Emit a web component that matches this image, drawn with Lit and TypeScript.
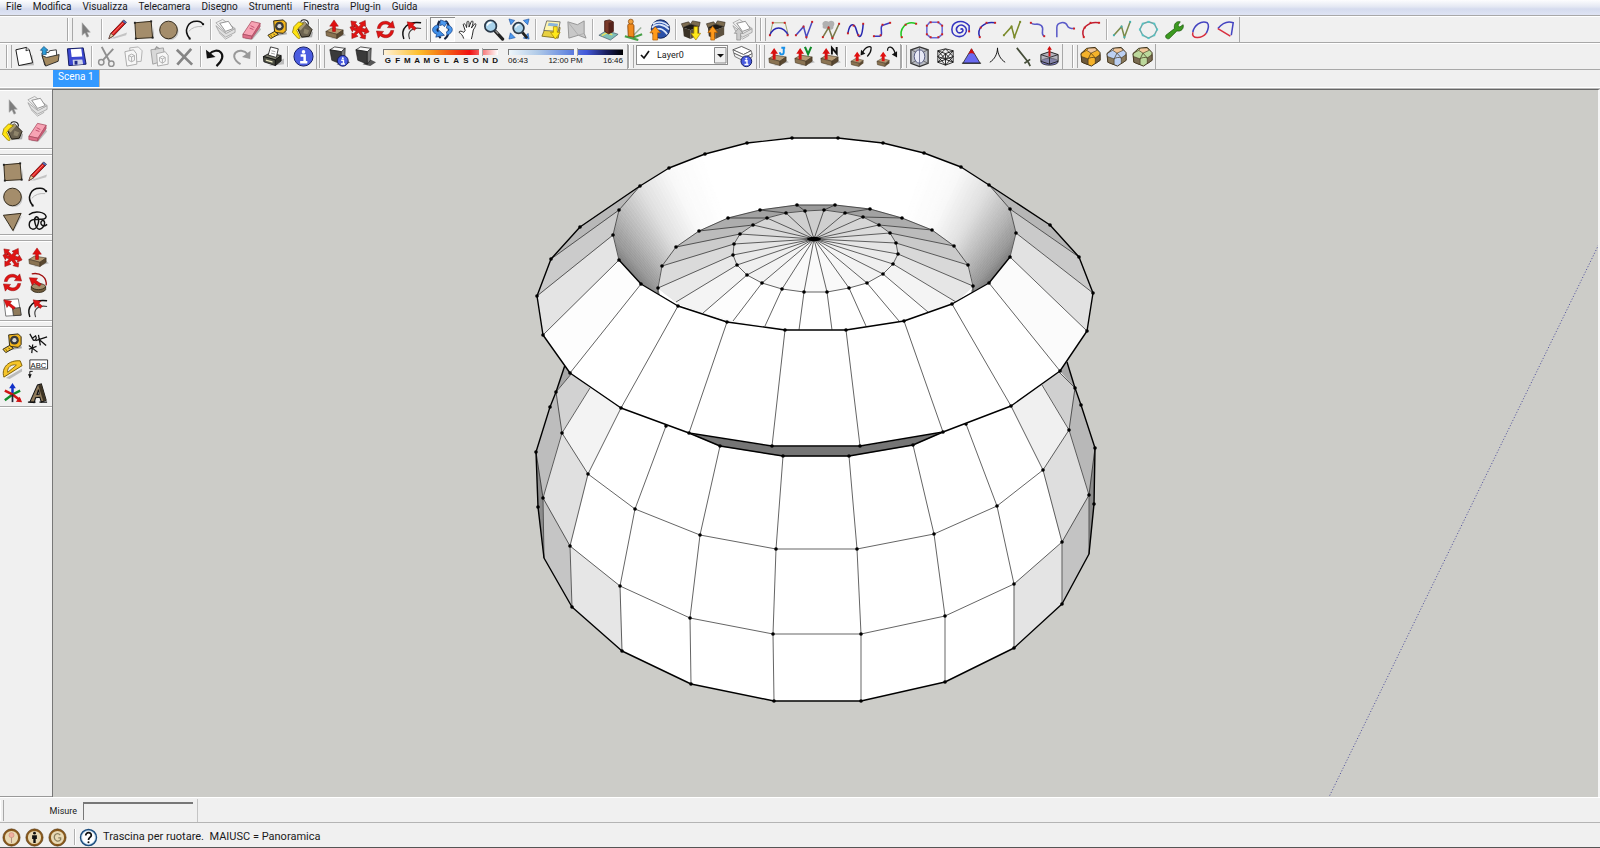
import { LitElement, html, svg, css, nothing } from "lit";
import { customElement, property, state } from "lit/decorators.js";

/* ---------- icon artwork, drawn on a 24 x 24 grid ---------- */

const slab = svg`
  <path d="M8 22 L16 20 L24 18 L20 15Z" fill="#bbb"/>
  <path d="M3 14 L9 10.500 L21 12.500 L14.500 17Z" fill="#b59b75" stroke="#40321f" stroke-width=".6"/>
  <path d="M3 14 L14.500 17 V21.500 L3.500 18.500Z" fill="#8a7352" stroke="#40321f" stroke-width=".6"/>
  <path d="M14.500 17 L21 12.500 V17 L14.500 21.500Z" fill="#5a4830" stroke="#40321f" stroke-width=".6"/>`;
const upArrow = svg`<path d="M11.500 2 L16 8.500 H13 V14 H10 V8.500 H7Z" fill="#e01010" stroke="#900" stroke-width=".5"/>`;
const smallPush = svg`
  <path d="M1 17 L6 14 L14 16 L9.500 19Z" fill="#b59b75" stroke="#40321f" stroke-width=".5"/>
  <path d="M1 17 L9.500 19 V22.500 L1.500 20.500Z" fill="#8a7352" stroke="#40321f" stroke-width=".5"/>
  <path d="M9.500 19 L14 16 V19 L9.500 22.500Z" fill="#5a4830"/>
  <path d="M7.500 7 L11 12 H9 V17 H6 V12 H4Z" fill="#e01010"/>`;
const glass = svg`
  <path d="M14 14 L21.500 22" stroke="#222" stroke-width="3.400" stroke-linecap="round"/>
  <path d="M14 13 L17 16.500" stroke="#888" stroke-width="1.500"/>
  <circle cx="9" cy="8.500" r="6" fill="#a9d3ec" stroke="#2b3a4a" stroke-width="1.800"/>
  <path d="M5.500 8 A4 4 0 0 1 10 4.800" stroke="#fff" stroke-width="1.400" fill="none"/>`;
const info = (x: number, y: number, r: number) => svg`
  <circle cx=${x} cy=${y} r=${r} fill="#4a5ce0" stroke="#101860" stroke-width="1"/>
  <circle cx=${x} cy=${y - r * 0.48} r=${r * 0.19} fill="#fff"/>
  <path d="M${x - r * 0.3} ${y - r * 0.1} H${x + r * 0.12} V${y + r * 0.6} M${x - r * 0.35} ${y + r * 0.6} H${x + r * 0.4}"
    fill="none" stroke="#fff" stroke-width=${r * 0.26}/>`;
const darkCube = svg`
  <path d="M10 20 L18 22 L24 18 L18 15Z" fill="#555"/>
  <path d="M3 5 L8 2 L19 3.500 L15 7Z" fill="#fafafa" stroke="#222" stroke-width=".8"/>
  <path d="M3 5 L15 7 V20 L5 16Z" fill="#3a3a3a" stroke="#111" stroke-width=".6"/>
  <path d="M15 7 L19 3.500 L18.500 15.500 L15 20Z" fill="#777" stroke="#111" stroke-width=".6"/>`;
const crate = (c: string) => svg`
  <path d="M3 10 L11 12.500 V22 L4 19Z" fill="#3a3226"/>
  <path d="M11 12.500 L20 9 V17.500 L11 22Z" fill="#5e5240"/>
  <path d="M3 10 L1.500 6 L9 4 L11 6.500Z M11 6.500 L13 3 L21 4.500 L20 9Z" fill="#7c6c50" stroke="#2a2218" stroke-width=".6"/>
  <path d="M3 10 L11 6.500 L20 9 L11 12.500Z" fill="#1e1a14"/>
  ${c === "down"
    ? svg`<path d="M14.500 9 H18.500 V16 H21.500 L16.500 23 L11.500 16 H14.500Z" fill="#ffe818" stroke="#a08000" stroke-width=".7"/>`
    : svg`<path d="M6 23 V15 H3 L8 8.500 L13 15 H10 V23Z" fill="#ff9a1a" stroke="#a85800" stroke-width=".7"/>`}`;
const roundedBox = (c: string, dark: string) => svg`
  <path d="M2 9 L8 3.500 L17 2.500 L22 8 V16 L13 22 L3 18Z" fill=${c} stroke="#3a2c14" stroke-width="1"/>
  <path d="M8 5.500 L10 3.300 L16.500 3 L19 5.500 L12.500 8.500Z" fill="#f2c79a" stroke="#3a2c14" stroke-width=".6"/>
  <path d="M2.500 12 L9.500 14.500 V20.500 L3 18Z" fill=${dark} stroke="#3a2c14" stroke-width=".6"/>
  <path d="M17 13.500 L22 10 V16 L17 19.500Z" fill=${dark} stroke="#3a2c14" stroke-width=".6"/>
  <path d="M9.500 14.500 L12.500 8.500 L17 13.500 M9.500 14.500 C11 13 15 12.500 17 13.500 M2 9 L8 5.500" fill="none" stroke="#3a2c14" stroke-width=".7"/>`;
const dots = (pts: number[][], c = "#d02020") => pts.map(([x, y]) => svg`<rect x=${x - 1} y=${y - 1} width="2" height="2" fill=${c}/>`);
const curve = (d: string, c: string, pts: number[][] = [], dc?: string) => svg`
  <path d=${d} fill="none" stroke=${c} stroke-width="1.600"/>${dots(pts, dc)}`;
const sheets = svg`
  <path d="M2 8 L5 14 L12 20 L22 15 V11 L12 16Z" fill="#e0e0e0" stroke="#9a9a9a" stroke-width=".8"/>
  <path d="M2 5 L9 1.500 L22 11 L13 16Z" fill="#ededed" stroke="#a0a0a0" stroke-width=".8"/>
  <path d="M6 5.500 L15 3.500 L20 11 L12 14Z" fill="#fff" stroke="#858585" stroke-width=".9"/>
  <path d="M5 15 L12 22 L19 18" fill="none" stroke="#aaa" stroke-width="1"/>`;
const coin = (inner: unknown) => svg`
  <circle cx="12" cy="12" r="9.600" fill="#e9d9b4" stroke="#8a5a1c" stroke-width="2.600"/>
  <circle cx="12" cy="12" r="10.900" fill="none" stroke="#4a2c08" stroke-width=".7"/>${inner}`;

const ART: Record<string, unknown> = {
  arrow: svg`<path d="M8.500 5 V18 L11.500 15.500 L13.500 20 L15.500 19 L13.500 14.800 H17Z" fill="#7d7d7d" stroke="#a5a5a5" stroke-width=".6"/>`,
  pencil: svg`<path d="M4 21.500 L22 15 L21 18 L9 21.500Z" fill="#c4c4c4"/>
    <path d="M3 21.500 L5 16 L17.500 3 L20.500 5.500 L8 18.500Z" fill="#d81818" stroke="#5a0808" stroke-width=".8"/>
    <path d="M6.500 17 L19 4" stroke="#ff8a80" stroke-width="1"/>
    <path d="M3 21.500 L5 16 L8 18.500Z" fill="#f0d2a0" stroke="#333" stroke-width=".6"/>
    <path d="M17 3.500 L18.500 2 L21.500 4.500 L20 6Z" fill="#5b6fc0" stroke="#223" stroke-width=".6"/>`,
  rect: svg`<path d="M5 22.500 L23 21 V9 L21 21Z" fill="#c0c0c0"/><path d="M3 5 L20 3.500 L21.500 20.500 L4 21.500Z" fill="#a48d6b" stroke="#2f2718" stroke-width="1"/>
    ${dots([[3, 5], [20, 3.5], [21.5, 20.5], [4, 21.5]], "#222")}`,
  circle: svg`<circle cx="13.500" cy="14" r="9" fill="#c6c6c6"/><circle cx="12" cy="12.500" r="9.200" fill="#a48d6b" stroke="#2f2718" stroke-width="1"/>`,
  arc: svg`<path d="M6 14 Q11 8 20 9" stroke="#b5b5b5" stroke-width="1" fill="none"/>
    <path d="M7 21.500 C0 13 5 3 15 3.500 C18 3.600 20 5 21 7" fill="none" stroke="#111" stroke-width="1.600"/>${dots([[7, 21.5], [21, 6.5]], "#111")}`,
  component: sheets,
  eraser: svg`<path d="M5 22 L13 22.500 L22 12 L20 9Z" fill="#bbb"/><path d="M3 17 L12 3.500 L21 5.500 L12.500 19Z" fill="#f7a3b4" stroke="#a84c60" stroke-width=".8"/>
    <path d="M3 17 L12.500 19 L12 22 L3 20.500Z" fill="#e0708a" stroke="#a84c60" stroke-width=".8"/>
    <path d="M12.500 19 L21 5.500 V9 L12 22Z" fill="#d05c78" stroke="#a84c60" stroke-width=".6"/><path d="M11 8 L15 10 M10 10.500 L14 12" stroke="#c05070" stroke-width="1"/>`,
  tape: svg`<path d="M9 19 L22 17 L20 12Z" fill="#aaa"/><path d="M8 3 L18 2 L21 5 V13 L18 16 L9 15Z" fill="#f2b51c" stroke="#2b2410" stroke-width="1"/>
    <circle cx="14" cy="8.500" r="4.600" fill="#3a3a3a"/><circle cx="14" cy="8.500" r="2.200" fill="#d8d8d8"/>
    <path d="M9 14 L13 17 L5 21.500 L2 18Z" fill="#f6c52a" stroke="#2b2410" stroke-width="1"/><path d="M5 18 L6 19.500 M8 16.500 L9 18" stroke="#222" stroke-width=".8"/>`,
  paint: svg`<path d="M10 21 L22 20 L23 14Z" fill="#aaa"/><path d="M6 9 L14 4 L22 12 L19 19 L11 20Z" fill="#6b6250" stroke="#1e1a10" stroke-width="1"/>
    <path d="M6 9 L14 4 L16 6 L10 13Z" fill="#a79a78"/><path d="M10 4 C12 0 19 2 18 7" fill="none" stroke="#222" stroke-width="1.200"/>
    <path d="M13 6 L8 4 L3 9 L1.500 15 L7 21 C10 22 10 21 8.500 18 L6 13 L9 9Z" fill="#ffe312" stroke="#8a7600" stroke-width=".8"/><path d="M14 11 L19 13 L17 17 L13 16Z" fill="#8f856b"/>`,
  pushpull: svg`${slab}${upArrow}`,
  move: svg`<path d="M3 3 L9 4 L7.800 5.800 L11 9 L13.500 7 L11.500 5.500 L18 2.500 L18.500 9 L16.500 8 L14.500 10.500 L18 11.500 L19 9.500 L22 14.500 L17 17 L17.500 14.800 L14 14 L16.500 18 L18.500 17.500 L18 22 L12.500 20.500 L14 19 L11 15 L8.500 17.500 L10.500 19 L4 21.500 L4 15.500 L6 16.500 L8.500 13.500 L5.500 12.500 L4.500 14.500 L2 9.500 L7 8 L6.500 10 L9 11 L5.500 7.500 L4 9Z" fill="#e01414" stroke="#8c0808" stroke-width=".5"/>`,
  rotate: svg`<path d="M3.500 11 C4 4 12 1 17.500 5.500 L19.500 3 L21.500 10.500 L14 10 L15.800 7.800 C12 5 7.500 6.500 6.500 11Z" fill="#e01414" stroke="#8c0808" stroke-width=".5"/>
    <path d="M20.500 13 C20 20 12 23 6.500 18.500 L4.500 21 L2.500 13.500 L10 14 L8.200 16.200 C12 19 16.500 17.500 17.500 13Z" fill="#e01414" stroke="#8c0808" stroke-width=".5"/>`,
  offset: svg`<path d="M4 22 C0 11 8 3 22 5" fill="none" stroke="#111" stroke-width="1.500"/><path d="M10 22 C7 14 13 9 22 11" fill="none" stroke="#444" stroke-width="1.200"/>
    <path d="M15 13 L11.500 9.800 L9.500 12 L7.500 4 L15.500 5.500 L13.500 7.500 L17 10.500Z" fill="#e01414" stroke="#8c0808" stroke-width=".5"/>`,
  orbit: svg`<path d="M15 3 C20 6 20 18 14 22 M9 3 C6 7 6 17 10 21" fill="none" stroke="#16233f" stroke-width="2.200"/>
    <path d="M7 7 C0 9 0 15 6 17 L5 20 L14 18 L8 12.500 L7.500 14.500 C4.500 13 5 11 8.500 10Z" fill="#3f8fe8" stroke="#12397c" stroke-width=".7"/>
    <path d="M10 2 L17 4.500 L14 9 L12 7 L9 8Z M17 7 C24 9 24 15 17 18 L16 14.500 C20 13 19 11 16 10.500Z" fill="#4a98ee" stroke="#12397c" stroke-width=".7"/>`,
  hand: svg`<path d="M7 21.500 C6 18 4 16 2.500 15.500 C1.500 13.500 4 13 7 15 L8.500 13 L6.500 7 C7 5 9 6 10 10 L10.500 4 C12 2 13 4 12.500 9.500 L15 3.500 C17 2 17.500 5 15 10.500 L18.500 6 C20.500 5.500 20 8 17 12.500 L16 18 L15 22" fill="#fff" stroke="#222" stroke-width="1"/>`,
  zoom: glass,
  zoomAll: svg`<path d="M1 1 L7 2.500 L3 7Z M22 1 L16 2.500 L20.500 7Z M1 22 L2.500 15.500 L7.500 20.500Z M22 22 L21 16 L16 21Z" fill="#4a98ee" stroke="#174a9c" stroke-width=".6"/>
    <path d="M15 15 L20 21" stroke="#222" stroke-width="3"/><circle cx="11" cy="10.500" r="5.600" fill="#a9d3ec" stroke="#2b3a4a" stroke-width="1.800"/><path d="M8 10 A3.500 3.500 0 0 1 12 7" stroke="#fff" stroke-width="1.300" fill="none"/>`,
  map: svg`<path d="M2 19 L6 9 L21 10 L19 21Z" fill="#e8d040" stroke="#706010" stroke-width=".8"/><path d="M7 3 L21 4 L19 14 L4 13Z" fill="#fff6b0" stroke="#555" stroke-width=".8"/>
    <path d="M9 5 L19 6 L18 9 L8 8Z" fill="#8ab4dc"/><path d="M14 9 H18 V15 H21 L16 22 L11 15 H14Z" fill="#ffe818" stroke="#a08000" stroke-width=".7"/>`,
  terrain: svg`<path d="M3 4 L13 7 L20 3 V16 L22 21 L14 18 L4 21Z" fill="#c8c8c8" stroke="#8d8d8d" stroke-width=".9"/><path d="M3 4 L14 18 L20 16" fill="none" stroke="#a6a6a6" stroke-width=".8"/>`,
  photo: svg`<path d="M2 18 L10 13 L22 17 L14 23Z" fill="#7fc0b8" stroke="#456" stroke-width=".7"/><path d="M5 18.500 L10 15.500 L16 17.500" fill="none" stroke="#e8e060" stroke-width="1.500"/>
    <path d="M8 3 L13 2 L17 4 V14 L12 16.500 L8 14Z" fill="#7a3a2a" stroke="#3a140c" stroke-width=".8"/><path d="M12 5 L17 4 V14 L12 16.500Z" fill="#54221a"/>`,
  figure: svg`<path d="M3 19 L10 21 L21 17 M10 21 L17 23" stroke="#46a046" stroke-width="2.200" fill="none"/><path d="M10 20 L20 10" stroke="#9ab09a" stroke-width="1.500"/>
    <path d="M6 8 C6 5 12 5 12.500 8 V20 L6.500 19Z" fill="#f08a1c" stroke="#7a3c04" stroke-width=".8"/><circle cx="9.200" cy="3.800" r="2.600" fill="#f0a03c" stroke="#7a3c04" stroke-width=".7"/>`,
  earth: svg`<circle cx="13" cy="11.500" r="9.600" fill="#2a50a8" stroke="#122458" stroke-width="1"/>
    <path d="M4 10 C9 5 16 6 22 12 M5 6.500 C11 2 18 5 21.500 8.500 M4 14 C10 9 16 11 20 17" stroke="#dce8fa" stroke-width="1.700" fill="none"/>
    <path d="M5 23 V15.500 H2 L7.500 9 L13 15.500 H10 V23Z" fill="#ff9a1a" stroke="#a85800" stroke-width=".7"/>`,
  getModels: crate("down"),
  shareModel: crate("up"),
  shareComponent: svg`${sheets}<path d="M6 23 V16 H3.500 L8 10.500 L12.500 16 H10 V23Z" fill="#ccc" stroke="#888" stroke-width=".7"/>`,
  bezier: svg`<path d="M6 5 H19 L22 17 M6 5 L3 18" fill="none" stroke="#9aa06a" stroke-width="1"/>${curve("M3 18 C7 8 17 8 22 18", "#2828b0", [[3, 18], [6, 5], [18.5, 5], [21.5, 18]])}`,
  poly: curve("M3 18 L11 9 L14 20 L20 4", "#4a4ac0", [[3, 18], [11, 9], [14, 20], [20, 4]]),
  polySplit: svg`<path d="M4 8 C2 3 8 2 10 4 C14 1 18 5 15 9 C16 13 8 13 8 11 C5 12 3 10 4 8Z" fill="#b0b0b0"/>${curve("M4 20 L10 10 L14 21 L21 6", "#7a7a4a", [[4, 20], [10, 10], [14, 21], [21, 6]])}`,
  spline: curve("M3 16 C5 4 10 5 12 13 C15 24 18 20 19 6", "#2828b0", [[3, 16], [9, 8], [14, 18], [19, 6]]),
  catmull: curve("M3 19 H9 C14 19 7 7 14 7 L20 5", "#3a3ac0", [[3, 19], [10, 18], [12, 7], [20, 5]]),
  greenArc: curve("M5 21 C2 12 9 2 20 6", "#20c820", [[5, 20], [9, 7], [20, 6]]),
  roundRect: curve("M7 4.500 H16 L20 8 V17 L16 20.500 H8 L4 17 V8Z", "#6a6ad8", [[8, 4.5], [16, 4.5], [20, 8], [20, 17], [16, 20], [8, 20], [4, 17], [4, 8]]),
  spiral: curve("M12 12 C14 10 16 13 13 15 C9 17 6 12 9 9 C13 5 19 9 18 14 C16 22 3 21 3 12 C3 4 14 0 21 8 V14", "#3434c0", [[21, 14]]),
  blueArc: curve("M5 20 C1 11 10 3 21 5", "#2828b0", [[5, 20], [6, 10], [12, 5], [21, 5]]),
  olive: curve("M3 18 L11 9 L14 20 L20 4", "#7a8a2a", [[3, 18], [11, 9], [14, 20], [20, 4]], "#7a8a2a"),
  hook: curve("M4 5 C8 9 10 4 15 8 C19 12 13 16 18 19", "#5a5ac8", [[4, 5], [18, 19]]),
  hook2: curve("M4 20 V10 C4 4 13 3 15 8 C16 11 19 11 22 11", "#5a5ac8", [[22, 11]]),
  redArc: curve("M5 20 C1 11 10 3 21 5", "#c01c30", [[5, 20], [6, 10], [12, 5], [21, 5]]),
  tealPoly: curve("M3 18 L11 9 L14 20 L20 4", "#7a8a4a", [[3, 18], [11, 9], [14, 20], [20, 4]], "#40b0b0"),
  tealRing: curve("M12 4 L18 6 L21 12 L18 18 L12 21 L6 18 L3 12 L6 6Z", "#6aa8a8", [[12, 4], [18, 6], [21, 12], [18, 18], [12, 21], [6, 18], [3, 12], [6, 6]], "#50c8c8"),
  wrench: svg`<path d="M3 18 L12 11 C11 6 14 3 18 4 L15.500 7.500 L17.500 9.500 L21 7 C22 11 19 14.500 14.500 13.500 L6.500 21.500 C4 22.500 2 20 3 18Z" fill="#3c9a20" stroke="#1c5a0c" stroke-width=".8"/>`,
  blob: svg`<path d="M4 15 C5 8 13 2 19 5 C21 7 20 12 18 16" fill="none" stroke="#4444c0" stroke-width="1.600"/><path d="M4 15 C2 22 13 22 18 16" fill="none" stroke="#d83040" stroke-width="1.600"/>`,
  wedge: svg`<path d="M3 11 C8 5 14 3 19 5 L17 18" fill="none" stroke="#4444c0" stroke-width="1.600"/><path d="M3 11 L16 19" stroke="#d83040" stroke-width="1.600"/>`,
  newFile: svg`<path d="M8 22 L22 21 L20 10Z" fill="#bbb"/><path d="M3 5 L14 2.500 L17 5 L20.500 18.500 L6 21.500Z" fill="#fff" stroke="#111" stroke-width="1"/><path d="M14 2.500 L13.500 6 L17 5" fill="#ddd" stroke="#111" stroke-width=".8"/>`,
  open: svg`<path d="M3 9 L5 7 L10 8 L11 6 L18 5 L19 17 L6 21Z" fill="#fff" stroke="#222" stroke-width=".9"/><path d="M3 11 L7 22 L20 17 L21 10 L8 13Z" fill="#a48a60" stroke="#222" stroke-width=".9"/>
    <path d="M5 1.500 L9.500 5.500 H7.500 V10 H3.500 V5.500 H1.500Z" fill="#2c9cd8" stroke="#0c4a78" stroke-width=".7"/>`,
  save: svg`<path d="M2.500 4 L19 3 L22 20 L4 21.500Z" fill="#3c48d0" stroke="#10185c" stroke-width="1"/><path d="M6 4.500 L17 4 L18 12 L7 12.500Z" fill="#fff"/><path d="M8 15.500 L18 15 L19 20 L8.500 21Z" fill="#cfd4e8"/><path d="M10 16.500 H13 V20.500 H10Z" fill="#222c88"/>`,
  cut: svg`<path d="M6 2 L14 17 M18 4 L7 16" stroke="#909090" stroke-width="2"/><circle cx="5.500" cy="18" r="2.800" fill="none" stroke="#909090" stroke-width="1.500"/><circle cx="16" cy="19.500" r="2.800" fill="none" stroke="#909090" stroke-width="1.500"/>`,
  copy: svg`<path d="M8 3 L17 2 L21 6 L20 17 L10 18Z" fill="#f4f4f4" stroke="#aaa" stroke-width=".9"/><path d="M3 7 L12 5 L15 9 L15.500 20 L5 22Z" fill="#f7f7f7" stroke="#a2a2a2" stroke-width=".9"/><path d="M7 11 L10 9.500 L13 11 V16 L10 17.500 L7 16Z M7 11 L10 12.500 L13 11 M10 12.500 V17.500" fill="none" stroke="#b0b0b0" stroke-width="1"/>`,
  paste: svg`<path d="M3 5 L16 3 L18 16 L5 20Z" fill="#d8d8d8" stroke="#999" stroke-width=".9"/><path d="M7 5 L9 2 L12 4" fill="none" stroke="#999" stroke-width="1.300"/><path d="M9 9 L18 7 L21 11 L21 20 L10 22Z" fill="#f7f7f7" stroke="#a2a2a2" stroke-width=".9"/><path d="M12 13 L15 11.500 L18 13 V17 L15 19 L12 17Z M12 13 L15 14.500 L18 13 M15 14.500 V19" fill="none" stroke="#b0b0b0" stroke-width="1"/>`,
  delete: svg`<path d="M4 5 L20 20.500 M19 4 L4.500 20.500" stroke="#858585" stroke-width="2.800"/>`,
  undo: svg`<path d="M5 10 C14 0 27 10 13 22" fill="none" stroke="#111" stroke-width="2.200"/><path d="M2 5 L3 14 L12 12.500Z" fill="#111"/>`,
  redo: svg`<path d="M19 10 C10 0 -4 11 11 20" fill="none" stroke="#999" stroke-width="2"/><path d="M21.500 6 L21 14.500 L12.500 12.500Z" fill="#999"/>`,
  print: svg`<path d="M8 22 L24 20 V14Z" fill="#bbb"/><path d="M2.500 12 L9 8.500 L21 11 L15 15.500Z" fill="#77786a" stroke="#111" stroke-width=".9"/>
    <path d="M7.500 10.500 L10 2 L18 4 L16 13Z" fill="#fff" stroke="#222" stroke-width=".9"/><path d="M11 6 L15 7 M10.500 8.500 L14.500 9.500" stroke="#888" stroke-width=".8"/>
    <path d="M2.500 12 L15 15.500 V21.500 L3 17.500Z" fill="#4e5044" stroke="#111" stroke-width=".9"/><path d="M15 15.500 L21 11 V16.500 L15 21.500Z" fill="#2c2d26" stroke="#111" stroke-width=".9"/><path d="M5 15 L12 17 V18.500 L5 16.500Z" fill="#e8e4c0"/>`,
  info: info(12, 12, 10),
  shadowInfo: svg`${darkCube}${info(16.5, 16.5, 5.6)}`,
  shadowCube: darkCube,
  layers: svg`<path d="M2 5 L11 1.500 L21 6 L13 10Z" fill="#fff" stroke="#333" stroke-width=".8"/><path d="M2 5 L13 10 L21 6 L22 9 L14 13.500 L3 8.500Z" fill="#fff" stroke="#555" stroke-width=".8"/><path d="M3 8.500 L4 12 L14 17 L22 12.500 V9 L14 13.500Z" fill="#f4f4f4" stroke="#555" stroke-width=".8"/>${info(16, 17, 5.6)}`,
  jointJ: svg`${slab}<path d="M8.500 3 L12.500 9 H10 V15 H7 V9 H4.500Z" fill="#d81010"/><path d="M18.500 2 V7.500 C18.500 10.500 14.500 10.500 14.500 7.500 M16 2.800 H20" fill="none" stroke="#1890e8" stroke-width="2"/>`,
  jointV: svg`${slab}<path d="M8.500 3 L12.500 9 H10 V15 H7 V9 H4.500Z" fill="#d81010"/><path d="M13.500 2 L16.800 9.500 L20 2" fill="none" stroke="#108a28" stroke-width="2.200"/>`,
  jointN: svg`${slab}<path d="M8.500 3 L12.500 9 H10 V15 H7 V9 H4.500Z" fill="#d81010"/><path d="M14.500 10 V3 L19.500 9 V2" fill="none" stroke="#111" stroke-width="2"/>`,
  pushBack: svg`${smallPush}<path d="M13 8 C16 1 23 0 22 4 C22 8 20 10 18 12" fill="none" stroke="#111" stroke-width="1.300"/><path d="M11 11 L11.500 5 L16 9Z" fill="#111"/>`,
  pushFwd: svg`${smallPush}<path d="M12 6 C12 0 18 1 20 9" fill="none" stroke="#111" stroke-width="1.300"/><path d="M22 13 L16.500 10 L22 6.500Z" fill="#111"/>`,
  ssSphere: svg`<path d="M3 5 L12 2 L21 5 V19 L12 22.500 L3 19Z" fill="#b9bcc2" stroke="#333" stroke-width="1.300"/><path d="M3 5 L12 9 L21 5 M12 2 V22 M3 19 L12 15 L21 19" stroke="#555" stroke-width=".8" fill="none"/><ellipse cx="12" cy="12" rx="5.500" ry="7" fill="#e8eaf6" stroke="#555a80" stroke-width="1"/><path d="M12 5 V19" stroke="#555a80" stroke-width=".8"/>`,
  ssMesh: svg`<path d="M4 6 L12 4 L20 6 V18 L12 21 L4 18Z M4 6 L12 9 L20 6 M12 9 V21 M4 6 L12 15 L20 6 M4 18 L12 9 L20 18 M4 12 L12 15 L20 12 M4 12 L12 4 L20 12 M4 12 L12 21 L20 12 M4 18 L12 15 L20 18" fill="none" stroke="#111" stroke-width=".9"/>`,
  ssCone: svg`<path d="M3 19 L12 4 L21 19Z" fill="#6a6af0" stroke="#222" stroke-width=".8"/><path d="M8.500 10 L12 3.500 L15.500 10 C13.500 8 10.500 8 8.500 10Z" fill="#d01010"/><path d="M2 19 H22" stroke="#222" stroke-width="1"/>`,
  ssPeak: svg`<path d="M4 18 C9 15 12 9 12 3 C12 9 15 15 20 18" fill="none" stroke="#111" stroke-width="1"/>`,
  ssKnife: svg`<path d="M5 3 L17 18 M13 19 L19 15 M17 18 L19 22" fill="none" stroke="#444c38" stroke-width="1.800"/>`,
  ssExtrude: svg`<ellipse cx="12" cy="17.500" rx="9" ry="3.600" fill="#7a7ac0" stroke="#222" stroke-width=".8"/><path d="M3 10 L12 7 L21 10 V17 L12 20 L3 17Z" fill="#8a8a9a" fill-opacity=".6" stroke="#222" stroke-width="1"/><path d="M3 10 L12 13 L21 10 M12 13 V20" stroke="#222" stroke-width=".9" fill="none"/><path d="M12 1 L14.500 5 H13 V12 H11 V5 H9.500Z" fill="#d01010"/>`,
  roundCorner: roundedBox("#f5b22a", "#6e5a3c"),
  sharpCorner: roundedBox("#bcd0f2", "#8a7a5c"),
  bevel: roundedBox("#bcd89c", "#7a6c52"),
  triangle: svg`<path d="M8 16 L13 23 L22 6Z" fill="#c4c4c4"/><path d="M2.500 5.500 L21 3.500 L12.500 21.500Z" fill="#a48d6b" stroke="#2f2718" stroke-width="1"/>`,
  freehand: svg`<path d="M3 5 C9 0 20 2 21 7 C21 11 13 9 8 10 C2 11 2 19 7 20 C13 20 15 8 11 7 C7 8 10 20 14 20 C20 19 21 10 17 11 C13 14 18 19 22 15" fill="none" stroke="#111" stroke-width="1.500"/>`,
  followMe: svg`<path d="M6 3 C15 1 22 7 21 15" fill="none" stroke="#a01010" stroke-width="1.400"/><ellipse cx="13" cy="16.500" rx="7.500" ry="3.500" fill="#a48d6b" stroke="#2f2718" stroke-width=".8"/><path d="M5.500 16.500 V19.500 C8 23.500 18 23.500 20.500 19.500 V16.500 C17 20.500 9 20.500 5.500 16.500Z" fill="#6e5a3c" stroke="#2f2718" stroke-width=".8"/>
    <path d="M14 16 L8.500 12.500 L6.500 15 L3.500 7 L12 7.500 L10.500 10 L16 13.500Z" fill="#e01414" stroke="#8c0808" stroke-width=".5"/>`,
  scale: svg`<path d="M3 4 L18 3 L21 20 L5 21Z" fill="#fff" stroke="#555" stroke-width=".8"/><path d="M12 13 L20 12 L21 20 L13 20.500Z" fill="#8f7b5c" stroke="#333" stroke-width=".8"/>
    <path d="M13 14 L8 9.800 L6.200 12 L3 4 L11 5.500 L9.500 7.800 L15 12Z" fill="#e01414" stroke="#8c0808" stroke-width=".5"/>`,
  dimension: svg`<path d="M4 2 L8 9 M6 7 L10 4 C12 7 9 10 7 8 M13 3 L15 14 M10 9 L22 5 M14 8 L21 14 M3 14 L12 21 M6 22 L7 13 M3 18 L11 15" stroke="#111" stroke-width="1.300" fill="none"/>`,
  protractor: svg`<path d="M5 22 L22 12 V15 L9 23Z" fill="#bbb"/><path d="M3 21 C0 11 8 3 20 4 L22 9Z" fill="#f6c52a" stroke="#7a5c04" stroke-width="1"/><path d="M7 16 C6 11 11 7 16 8.500Z" fill="#f0f0f0" stroke="#7a5c04" stroke-width=".9"/>`,
  label: svg`<path d="M4 22 V15 H7" fill="none" stroke="#111" stroke-width="1"/><path d="M2 18 H6 L4 22Z" fill="#111"/><path d="M4 3 H22.500 V12.500 H4Z" fill="#fff" stroke="#222" stroke-width=".9"/>
    <text x="13" y="11" text-anchor="middle" font-family="Liberation Sans, sans-serif" font-size="8" fill="#111">ABC</text>`,
  axes: svg`<path d="M12 13 V4" stroke="#1030c8" stroke-width="2.600"/><path d="M12 1 L15.500 6.500 H8.500Z" fill="#1030c8"/><path d="M12 13 L4 19 M12 13 L20 9" stroke="#108a28" stroke-width="2.400"/><path d="M12 13 L20 19 M12 13 L4 9" stroke="#d01414" stroke-width="2.600"/><path d="M22 21 L15.500 20.500 L19.500 15.500Z" fill="#d01414"/><path d="M12 13 V21" stroke="#223" stroke-width="1.800"/>`,
  text3d: svg`<path d="M4 21 L12 3 L16 2 L21 19 L16 21 L14.500 16 L10 16.500 L8.500 21.500Z M11.500 13 L13.800 12.600 L13 8Z" fill="#8f7b5c" fill-rule="evenodd" stroke="#111" stroke-width="1.100"/><path d="M16 2 L21 19 L18 20 L13 4Z" fill="#3e3424"/><path d="M2 21 H10 M14 21 H22" stroke="#111" stroke-width="1.500"/>`,
  geo: coin(svg`<circle cx="12" cy="9" r="3.200" fill="#f0b0a0" stroke="#c08070" stroke-width=".6"/><path d="M12 12 V19" stroke="#b09080" stroke-width="1.300"/>`),
  person: coin(svg`<circle cx="12" cy="6.500" r="1.800" fill="#111"/><path d="M9 9 H15 V14 H13.500 V19 H10.500 V14 H9Z" fill="#111"/>`),
  credit: coin(svg`<path d="M15.500 9 C12 5 7.500 8 8 12.500 C8.500 17 14 18 16 14.500 V12.500 H13" fill="none" stroke="#8a8060" stroke-width="1.600"/>`),
  help: svg`<circle cx="12" cy="12" r="10" fill="#fff" stroke="#1c4c7c" stroke-width="2"/><circle cx="12" cy="12" r="8.700" fill="none" stroke="#9cc4e4" stroke-width=".8"/><path d="M8.500 9.500 C8.500 4.500 16 5 15.500 9.500 C15 12 12 12 12 15" fill="none" stroke="#111" stroke-width="2.200"/><circle cx="12" cy="18" r="1.300" fill="#111"/>`,
};

/* ---------- the dome model ---------- */

type P = [number, number];
const pts = (a: P[]) => a.map((p) => p.join(",")).join(" ");
const face = (fill: string, ...a: P[]) => svg`<polygon points=${pts(a)} fill=${fill} stroke=${fill} stroke-width=".6"/>`;

// Upper rim of the roof, clockwise from the back left vertex.
const RIM: P[] = [
  [792, 138], [838, 138], [883, 143], [924, 153], [961, 167], [989, 185], [1010, 209], [1016, 233], [1010, 257], [989, 283],
  [952, 304], [904, 321], [846, 330], [785, 330], [727, 322], [678, 306], [641, 284], [619, 260], [613, 235], [619, 210],
  [640, 186], [669, 168], [705, 154], [747, 143],
];
// Lower edge of the smooth inner wall, same order as RIM.
const WELL: P[] = [
  [797, 205], [835, 205], [870, 209], [902, 218], [932, 230], [954, 246], [968, 265], [973, 286], [968, 308], [954, 328],
  [932, 345], [902, 357], [866, 364], [765, 364], [728, 357], [698, 345], [676, 328], [662, 308], [658, 288], [662, 266],
  [676, 247], [699, 231], [728, 218], [760, 210],
];
const WALL_TONE = [255, 255, 255, 255, 249, 224, 184, 152, 122, 104, 100, 100, 100, 100, 100, 100, 104, 122, 152, 184, 224, 249, 255, 255];
// Roof eave, from the back right round the front to the back left.
const EAVE: P[] = [
  [1050, 225], [1079, 257], [1093, 293], [1087, 331], [1060, 371], [1011, 406], [943, 432], [860, 446], [772, 446], [689, 433],
  [621, 408], [570, 373], [543, 335], [537, 296], [551, 259], [580, 227],
];
// Small ring around the apex and the far end of each rib.
const RING: P[] = [
  [805, 211], [824, 210], [845, 213], [863, 217], [879, 225], [890, 233], [896, 243], [898, 254], [893, 264], [883, 274],
  [867, 283], [849, 288], [827, 292], [804, 292], [782, 289], [762, 283], [747, 275], [737, 265], [733, 255], [734, 244],
  [740, 234], [753, 225], [767, 218], [786, 213],
];
const RIB_END: P[] = [
  [797, 205], [835, 205], [870, 209], [902, 218], [932, 230], [954, 246], [968, 265], [973, 286], [956, 302], [928, 312],
  [899, 321], [866, 326], [832, 330], [799, 330], [765, 326], [733, 321], [703, 313], [676, 302], [658, 288], [662, 266],
  [676, 247], [699, 231], [728, 218], [760, 210],
];
const RIB_TONE = ["#9a9a9a", "#9c9c9c", "#a2a2a2", "#adadad", "#bcbcbc", "#cacaca", "#d8d8d8", "#e6e6e6", "#f4f4f4", "#fdfdfd", "#fff", "#fff",
  "#fff", "#fff", "#fff", "#fdfdfd", "#f4f4f4", "#e9e9e9", "#dadada", "#cccccc", "#bcbcbc", "#adadad", "#a2a2a2", "#9c9c9c"];
const CONE_TONE = ["#cecece", "#cfcfcf", "#d2d2d2", "#d6d6d6", "#dbdbdb", "#e0e0e0", "#e5e5e5", "#eaeaea", "#efefef", "#f3f3f3", "#f7f7f7", "#f9f9f9",
  "#fafafa", "#f9f9f9", "#f7f7f7", "#f3f3f3", "#efefef", "#eaeaea", "#e5e5e5", "#e0e0e0", "#dbdbdb", "#d6d6d6", "#d2d2d2", "#cfcfcf"];
const APEX: P = [814, 239];

// Rows of the body, left to right.
const ROW0: P[] = [[590, 388], [621, 408], [666, 426], [720, 446], [783, 456], [849, 456], [913, 445], [966, 424], [1011, 406], [1042, 385]];
const ROW1: P[] = [[562, 433], [588, 474], [635, 509], [700, 535], [776, 549], [857, 549], [934, 534], [997, 506], [1043, 470], [1069, 430]];
const ROW2: P[] = [[543, 498], [570, 546], [620, 586], [690, 618], [773, 634], [861, 634], [945, 616], [1014, 584], [1062, 542], [1089, 495]];
const ROW3: P[] = [[544, 558], [572, 607], [622, 651], [691, 684], [774, 701], [861, 701], [945, 682], [1014, 648], [1062, 604], [1089, 554]];
const LEFT: P[] = [[565, 365], [556, 392], [550, 407], [536, 452], [538, 507]];
const RIGHT: P[] = [[1067, 362], [1075, 388], [1081, 405], [1095, 448], [1094, 504]];

const mix = (a: P, b: P, t: number): P => [a[0] + (b[0] - a[0]) * t, a[1] + (b[1] - a[1]) * t];

function wall() {
  const out = [];
  const steps = 10;
  for (let i = 0; i < 24; i++) {
    const j = (i + 1) % 24;
    for (let k = 0; k < steps; k++) {
      const t = k / steps;
      const u = (k + 1) / steps;
      const g = Math.round(WALL_TONE[i] + (WALL_TONE[j] - WALL_TONE[i]) * (t + u) / 2);
      out.push(face(`rgb(${g},${g},${g})`, mix(RIM[i], RIM[j], t), mix(RIM[i], RIM[j], u), mix(WELL[i], WELL[j], u), mix(WELL[i], WELL[j], t)));
    }
  }
  return out;
}

const line = (a: P, b: P, cls = "thin") => svg`<path class=${cls} d="M${a.join(" ")}L${b.join(" ")}"/>`;
const chain = (a: P[], cls: string) => svg`<polyline class=${cls} points=${pts(a)}/>`;
const marks = (a: P[]) => a.map((p) => svg`<circle cx=${p[0]} cy=${p[1]} r="1.800"/>`);

function body() {
  return svg`
    ${face("#fff", ...LEFT, ...ROW3, ...[...RIGHT].reverse())}
    ${face("#a8a8a8", [565, 365], [572, 373], [556, 392])}
    ${face("#d2d2d2", [556, 392], [572, 373], [590, 388], [562, 433])}
    ${face("#f3f3f3", ROW0[0], ROW0[1], ROW1[1], ROW1[0])}
    ${face("#bdbdbd", [556, 392], ROW1[0], ROW2[0], [536, 452])}
    ${face("#e0e0e0", ROW1[0], ROW1[1], ROW2[1], ROW2[0])}
    ${face("#8c8c8c", [536, 452], ROW2[0], ROW3[0], [538, 507])}
    ${face("#c5c5c5", ROW2[0], ROW2[1], ROW3[1], ROW3[0])}
    ${face("#e6e6e6", ROW2[1], ROW2[2], ROW3[2], ROW3[1])}
    ${face("#a8a8a8", [1067, 362], [1060, 371], [1075, 388])}
    ${face("#d0d0d0", [1075, 388], [1058, 371], ROW0[9], ROW1[9])}
    ${face("#f0f0f0", ROW0[9], ROW0[8], ROW1[8], ROW1[9])}
    ${face("#b8b8b8", [1075, 388], ROW1[9], ROW2[9], [1095, 448])}
    ${face("#dedede", ROW1[9], ROW1[8], ROW2[8], ROW2[9])}
    ${face("#8c8c8c", [1095, 448], ROW2[9], ROW3[9], [1094, 504])}
    ${face("#c3c3c3", ROW2[9], ROW2[8], ROW3[8], ROW3[9])}
    ${face("#e4e4e4", ROW2[8], ROW2[7], ROW3[7], ROW3[8])}
    ${face("#757575", [689, 433], [772, 446], [860, 446], [943, 432], [913, 445], [849, 456], [783, 456], [720, 446])}
    ${ROW1.map((p, i) => svg`${line(ROW0[i], p)}${line(p, ROW2[i])}${line(ROW2[i], ROW3[i])}`)}
    ${chain(ROW1, "thin")}${chain(ROW2, "thin")}
    ${line([556, 392], ROW1[0])}${line([556, 392], [572, 373])}${line([536, 452], ROW2[0])}
    ${line([1075, 388], ROW1[9])}${line([1075, 388], [1058, 371])}${line([1095, 448], ROW2[9])}
    ${chain([[689, 433], ...ROW0.slice(3, 7), [943, 432]], "edge")}
    ${chain([...LEFT, ...ROW3, ...[...RIGHT].reverse()], "edge")}
    ${marks([...ROW0.slice(2, 8), ...ROW1, ...ROW2])}
    ${marks([...LEFT.slice(1), ...RIGHT.slice(1), ...ROW3.slice(1, 9)])}`;
}

function roof() {
  // RIM index that sits above each EAVE vertex.
  const above = (k: number) => (k + 5) % 24;
  const tones = ["#b6b6b6", "#cacaca", "#e2e2e2", "#fbfbfb", "#fff", "#fff", "#fff", "#fff", "#fff", "#fff", "#fff", "#fdfdfd", "#e4e4e4", "#cbcbcb", "#b8b8b8"];
  return svg`
    ${face("#fff", ...RIM)}
    ${wall()}
    ${face("#ddd", ...RIB_END)}
    ${RING.map((p, i) => {
      const j = (i + 1) % 24;
      return svg`${face(RIB_TONE[i], p, RING[j], RIB_END[j], RIB_END[i])}${face(CONE_TONE[i], p, RING[j], APEX)}`;
    })}
    ${RING.map((p, i) => svg`${line(p, RIB_END[i])}${line(p, APEX)}`)}
    ${chain([...RING, RING[0]], "thin")}
    ${chain([[658, 294], ...RIB_END.slice(18), ...RIB_END.slice(0, 8), [973, 292]], "thin")}
    <ellipse cx="814" cy="239" rx="7" ry="2.200"/>
    ${marks(RING)}${marks([...RIB_END.slice(18), ...RIB_END.slice(0, 8)])}
    ${tones.map((t, k) => face(t, RIM[above(k)], RIM[above(k + 1)], EAVE[k + 1], EAVE[k]))}
    ${EAVE.slice(1, 15).map((p, k) => line(p, RIM[above(k + 1)]))}
    ${chain(RIM.slice(5, 9), "thin")}${chain(RIM.slice(17, 21), "thin")}
    ${chain([...RIM.slice(20), ...RIM.slice(0, 6)], "edge")}${chain(RIM.slice(8, 18), "edge")}
    ${chain([RIM[5], ...EAVE, RIM[20]], "edge")}
    ${marks(RIM)}${marks(EAVE)}`;
}

@customElement("model-view")
class ModelView extends LitElement {
  static styles = css`
    :host { display: block; overflow: hidden; min-width: 0; min-height: 0; background: #ccccc8; }
    svg { display: block; width: 100%; height: 100%; }
    .thin { fill: none; stroke: #222; stroke-width: 0.7; }
    .edge { fill: none; stroke: #000; stroke-width: 1.4; stroke-linejoin: round; }
    .axis { stroke: #4a4a9a; stroke-width: 1; stroke-dasharray: 1 2; }
  `;
  render() {
    return html`<svg viewBox="53 90 1545 707" preserveAspectRatio="xMidYMid slice" role="img" aria-label="Modello 3D">
      <path class="axis" d="M1600 242 L1329 797"/>
      ${body()}${roof()}
    </svg>`;
  }
}

@customElement("tool-button")
class ToolButton extends LitElement {
  @property() icon = "";
  @property() label = "";
  @property({ type: Boolean }) pressed = false;
  static styles = css`
    :host { display: flex; min-width: 0; --size: 23px; }
    button { flex: 1; min-width: 0; display: flex; align-items: center; justify-content: center; border: 0; padding: 0; background: none; overflow: hidden; }
    button.on { background: #f8f8f8; box-shadow: inset 1px 1px #8c8c8c, inset -1px -1px #fff; }
    svg { flex: none; width: var(--size); height: var(--size); display: block; }
  `;
  render() {
    return html`<button class=${this.pressed ? "on" : ""} aria-label=${this.label || this.icon} aria-pressed=${this.pressed ? "true" : "false"}>
      <svg viewBox="0 0 24 24" fill="#111" aria-hidden="true">${ART[this.icon]}</svg>
    </button>`;
  }
}

const MENU = ["File", "Modifica", "Visualizza", "Telecamera", "Disegno", "Strumenti", "Finestra", "Plug-in", "Guida"];
const START = ["arrow", "|", "pencil", "rect", "circle", "arc", "|", "component", "eraser", "tape", "paint", "|", "pushpull", "move", "rotate", "offset", "|",
  "orbit", "hand", "zoom", "zoomAll", "|", "map", "terrain", "|", "photo", "figure", "earth", "|", "getModels", "shareModel", "shareComponent"];
const CURVES = ["bezier", "poly", "polySplit", "spline", "catmull", "greenArc", "roundRect", "spiral", "blueArc", "olive", "hook", "hook2", "redArc", "|",
  "tealPoly", "tealRing", "wrench", "blob", "wedge"];
const STANDARD = ["newFile", "open", "save", "|", "cut", "copy", "paste", "delete", "|", "undo", "redo", "|", "print", "|", "info"];
const JOINT = ["jointJ", "jointV", "jointN", "|", "pushBack", "pushFwd"];
const SUBDIVIDE = ["ssSphere", "ssMesh", "ssCone", "ssPeak", "ssKnife", "ssExtrude"];
const CORNER = ["roundCorner", "sharpCorner", "bevel"];
const SIDE = [
  ["arrow", "component", "paint", "eraser"],
  ["rect", "pencil", "circle", "arc", "triangle", "freehand"],
  ["move", "pushpull", "rotate", "followMe", "scale", "offset"],
  ["tape", "dimension", "protractor", "label", "axes", "text3d"],
];

@customElement("app-root")
class AppRoot extends LitElement {
  @state() private month = 86;
  @state() private hour = 59;

  static styles = css`
    :host {
      display: grid; grid-template-rows: 15px 27px 27px 19px minmax(0, 1fr) 26px 25px; height: 100vh;
      background: #f0f0f0; color: #1a1a1a; font: 10px/14px Roboto, "Noto Sans", sans-serif; overflow: hidden;
    }
    * { box-sizing: border-box; }
    .menu { display: flex; gap: 11px; padding: 0 6px; background: linear-gradient(#fdfdfe, #e4e8f3 45%, #d5dbee 60%, #dfe4f4); }
    .menu a { color: inherit; text-decoration: none; line-height: 14px; }
    .row { display: flex; border-top: 1px solid #a8a8a8; box-shadow: inset 0 1px #fff; padding-top: 1px; min-width: 0; }
    .bar { display: flex; flex: none; }
    .bar tool-button { flex: 21 1 0; }
    .w-std tool-button { flex-grow: 26; }
    .sep { flex: 5 1 0; display: flex; justify-content: center; }
    .sep::before { content: ""; width: 1px; margin: 2px 0; background: #b0b0b0; box-shadow: 1px 0 #fff; }
    .grip { flex: none; width: 6px; margin: 1px 0; border-left: 1px solid #a8a8a8; border-right: 1px solid #a8a8a8; box-shadow: inset 1px 0 #fff; }
    .end { flex: none; width: 1px; background: #a8a8a8; }
    .lead { width: 67px; }
    .space1 { width: 6px; } .space2 { width: 4px; } .space3 { width: 2px; } .space4 { width: 9px; }
    .w-start { width: 682px; } .w-curves { width: 473px; } .w-std { width: 304px; } .w-shadow { width: 52px; }
    .w-joint { width: 135px; } .w-sub { width: 155px; } .w-corner { width: 77px; }
    .slider { width: 115px; display: flex; flex-direction: column; padding-top: 4px; }
    .slider input { appearance: none; -webkit-appearance: none; width: 100%; height: 8px; margin: 0; background: none; display: block; }
    .slider input::-webkit-slider-runnable-track { height: 6px; border-top: 1px solid #777; border-left: 1px solid #777; }
    .slider .month::-webkit-slider-runnable-track { background: linear-gradient(90deg, #fff2d8, #fdc030 30%, #f68a18 45%, #f01010 75%, #f46060 84%, #fff); }
    .slider .hour::-webkit-slider-runnable-track { background: linear-gradient(90deg, #eef6fa, #b0cae8 25%, #6a8ce0 50%, #4258d8 68%, #1c2060 85%, #000); }
    .slider input::-webkit-slider-thumb { -webkit-appearance: none; width: 4px; height: 8px; margin-top: -2px; background: #f4f4f4; border-right: 1px solid #aaa; }
    .scale { display: flex; justify-content: space-between; font: 8px/10px "Liberation Sans", Arial, sans-serif; color: #111; white-space: nowrap; }
    .months { font-weight: bold; margin: 0 -2px 0 0; }
    .months span { flex: 1; text-align: center; }
    .layer { position: relative; width: 92px; height: 20px; margin: 1px 3px 0 0; }
    .layer select { appearance: none; -webkit-appearance: none; width: 100%; height: 100%; border: 1px solid #8c8c8c; border-radius: 0; background: #fff; color: #222; font: inherit; font-size: 9px; padding: 0 0 0 20px; }
    .layer svg { position: absolute; inset: 0; width: 100%; height: 100%; pointer-events: none; }
    .tabs { display: flex; border-top: 1px solid #a8a8a8; padding-left: 53px; border-bottom: 1px solid #fff; }
    .tab { border: 0; border-right: 1px solid #c4b8a8; background: #3399ff; color: #fff; font: inherit; padding: 0 5px; height: 17px; line-height: 14px; display: flex; }
    .work { display: grid; grid-template-columns: 52px minmax(0, 1fr); border-top: 1px solid #b8b8b8; min-height: 0; }
    .side { display: flex; flex-direction: column; min-height: 0; border-bottom: 1px solid #999; }
    .group { display: grid; grid-template-columns: 25px 25px; grid-auto-rows: 25px; padding: 4px 0 0; }
    .bars { height: 7px; border-top: 1px solid #a8a8a8; border-bottom: 1px solid #a8a8a8; box-shadow: inset 0 1px #fff, 0 1px #fff; }
    .first { height: 1px; border-top: 0; }
    .first + .group { padding-bottom: 4px; }
    .last { height: 1px; border-bottom: 0; }
    model-view { border-top: 1px solid #666; border-left: 1px solid #777; border-right: 2px solid #f4f4f4; }
    .measure { display: flex; align-items: center; border-top: 1px solid #fff; border-bottom: 1px solid #b4b4b4; font-size: 9px; padding-top: 1px; }
    .measure .grip { width: 4px; align-self: stretch; border-left: 0; }
    .measure label { width: 74px; text-align: right; padding-right: 1px; }
    .measure input { width: 110px; height: 18px; margin: 0 4px 0 5px; border: 0; border-top: 2px solid #777; border-left: 1px solid #777; background: #f0f0f0; font: inherit; padding: 0 2px; }
    .measure .end { align-self: stretch; background: #c4c4c4; }
    .status { display: flex; align-items: center; border-bottom: 1px solid #555; font-size: 11px; white-space: pre; padding-top: 4px; }
    .status tool-button { width: 23px; height: 20px; --size: 19px; }
    .status .sep { flex: none; width: 8px; align-self: stretch; }
    .status span { padding-left: 3px; }
  `;

  private tools(items: string[], width: string) {
    return html`<div class="bar ${width}" role="toolbar">
      ${items.map((n) => (n === "|" ? html`<span class="sep"></span>` : html`<tool-button icon=${n} ?pressed=${n === "orbit"}></tool-button>`))}
    </div>`;
  }

  render() {
    return html`
      <nav class="menu">${MENU.map((m) => html`<a href="#">${m}</a>`)}</nav>
      <div class="row">
        <div class="lead"></div><div class="grip"></div>${this.tools(START, "w-start")}<div class="end"></div>
        <div class="space2"></div><div class="grip"></div>${this.tools(CURVES, "w-curves")}<div class="end"></div>
      </div>
      <div class="row">
        <div class="space1"></div><div class="grip"></div>${this.tools(STANDARD, "w-std")}<div class="end"></div>
        <div class="space3"></div><div class="grip"></div>${this.tools(["shadowInfo", "shadowCube"], "w-shadow")}
        <div class="space1"></div>
        <div class="slider">
          <input class="month" type="range" aria-label="Data" .value=${String(this.month)} @input=${(e: Event) => (this.month = +(e.target as HTMLInputElement).value)}>
          <div class="scale months">${["G", "F", "M", "A", "M", "G", "L", "A", "S", "O", "N", "D"].map((m) => html`<span>${m}</span>`)}</div>
        </div>
        <div class="space1"></div><div class="space2"></div>
        <div class="slider">
          <input class="hour" type="range" aria-label="Ora" .value=${String(this.hour)} @input=${(e: Event) => (this.hour = +(e.target as HTMLInputElement).value)}>
          <div class="scale"><span>06:43</span><span>12:00 PM</span><span>16:46</span></div>
        </div>
        <div class="space2"></div><div class="end"></div><div class="grip"></div><div class="space3"></div>
        <div class="layer">
          <select aria-label="Layer"><option>Layer0</option></select>
          <svg viewBox="0 0 92 20" aria-hidden="true">
            <path d="M5 10 L8 13 L13 6" fill="none" stroke="#111" stroke-width="1.700"/>
            <path d="M78.500 2.500 H90 V18 H78.500Z" fill="#f0f0f0" stroke="#888"/><path d="M81 9 H88 L84.500 12.500Z" fill="#111"/>
          </svg>
        </div>
        ${this.tools(["layers"], "w-one")}
        <div class="space3"></div><div class="end"></div><div class="space3"></div><div class="grip"></div>${this.tools(JOINT, "w-joint")}<div class="end"></div>
        <div class="grip"></div>${this.tools(SUBDIVIDE, "w-sub")}<div class="end"></div>
        <div class="space4"></div><div class="grip"></div>${this.tools(CORNER, "w-corner")}<div class="end"></div>
      </div>
      <div class="tabs"><button class="tab">Scena 1</button></div>
      <main class="work">
        <aside class="side">
          <div class="bars first"></div>
          ${SIDE.map((g, i) => html`${i ? html`<div class="bars"></div>` : nothing}
            <div class="group">${g.map((n) => html`<tool-button icon=${n}></tool-button>`)}</div>`)}
          <div class="bars last"></div>
        </aside>
        <model-view></model-view>
      </main>
      <div class="measure">
        <div class="grip"></div><label for="measure">Misure</label><input id="measure" type="text"><div class="end"></div>
      </div>
      <footer class="status">
        <tool-button icon="geo"></tool-button><tool-button icon="person"></tool-button><tool-button icon="credit"></tool-button>
        <span class="sep"></span>
        <tool-button icon="help"></tool-button><span>Trascina per ruotare.  MAIUSC = Panoramica</span>
      </footer>`;
  }
}
